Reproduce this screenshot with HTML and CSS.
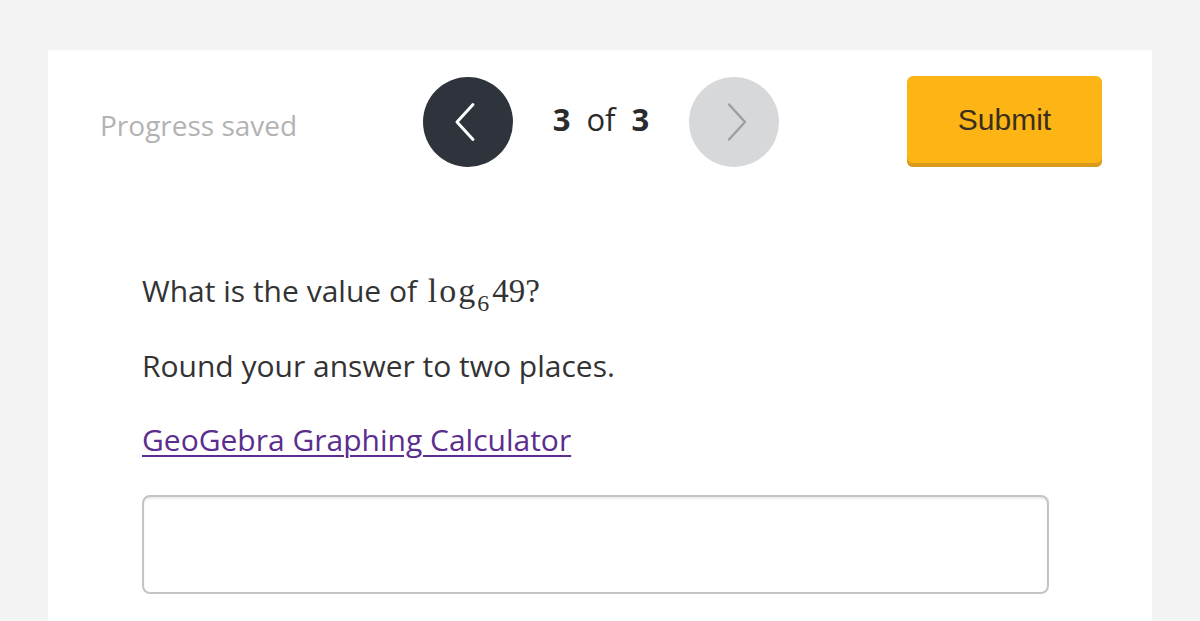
FILE: index.html
```html
<!DOCTYPE html>
<html lang="en">
<head>
<meta charset="utf-8">
<title>Question 3 of 3</title>
<link rel="stylesheet" href="styles.css">
</head>
<body>
<main class="card">
  <header class="topbar">
    <div class="status">Progress saved</div>
    <nav class="pager">
      <button class="nav-btn prev" aria-label="Previous">
        <svg class="chev" width="24" height="40" viewBox="0 0 24 40"><path d="M20 2.5 L4 20 L20 37.5" fill="none" stroke="#ffffff" stroke-width="3" stroke-linecap="round" stroke-linejoin="round"/></svg>
      </button>
      <div class="count"><b>3</b> of <b>3</b></div>
      <button class="nav-btn next" aria-label="Next">
        <svg class="chev" width="24" height="40" viewBox="0 0 24 40"><path d="M4 2.5 L20 20 L4 37.5" fill="none" stroke="#9d9fa2" stroke-width="2.5" stroke-linecap="round" stroke-linejoin="round"/></svg>
      </button>
    </nav>
    <div class="actions">
      <button class="submit">Submit</button>
    </div>
  </header>
  <section class="question">
    <p class="q-line">What is the value of <span class="math"><span class="fn">log</span><sub>6</sub>49?</span></p>
    <p class="q-line">Round your answer to two places.</p>
    <p class="q-line"><a class="tool-link" href="#">GeoGebra Graphing Calculator</a></p>
    <div class="answer" role="textbox"></div>
  </section>
</main>
</body>
</html>
```
FILE: styles.css
```css
html, body {
  margin: 0;
  padding: 0;
  height: 100%;
  background: #f3f3f3;
  overflow: hidden;
}
body {
  padding: 50px 48px 0;
  box-sizing: border-box;
  font-family: "Open Sans", "Noto Sans", sans-serif;
}
.card {
  background: #ffffff;
  height: 100%;
  padding: 26px 50px 0 52px;
  box-sizing: border-box;
}
.topbar {
  display: grid;
  grid-template-columns: 1fr auto 1fr;
  align-items: center;
  height: 91px;
}
.status {
  font-size: 28px;
  color: #b3b3b3;
  padding-top: 6px;
}
.pager {
  display: flex;
  align-items: center;
  gap: 40px;
}
.nav-btn {
  width: 90px;
  height: 90px;
  border-radius: 50%;
  border: none;
  padding: 0;
  display: flex;
  align-items: center;
  justify-content: center;
}
.prev { background: #2f333b; }
.prev .chev { margin-right: 6px; }
.next { background: #d7d8da; }
.next .chev { margin-left: 6px; }
.count {
  font-size: 31px;
  color: #2b2b2b;
  word-spacing: 8px;
  padding-bottom: 5px;
}
.count b { font-weight: 700; }
.actions {
  display: flex;
  justify-content: flex-end;
}
.submit {
  width: 195px;
  height: 91px;
  border: none;
  border-radius: 6px;
  background: #fdb515;
  box-shadow: inset 0 -4px 0 #d99a1e;
  font-family: "Liberation Sans", Arial, sans-serif;
  font-size: 30px;
  color: #3a2f1f;
  padding: 0 0 4px;
}
.question {
  padding: 103px 0 0 42px;
  margin-right: 53px;
}
.q-line {
  margin: 0 0 32.5px;
  font-size: 30px;
  line-height: 42px;
  color: #333333;
}
.math {
  font-family: "Liberation Serif", "Times New Roman", serif;
  font-size: 33px;
  line-height: 1;
  margin-left: 3px;
}
.math .fn {
  font-size: 34px;
  letter-spacing: 2px;
}
.math sub {
  font-size: 24px;
  vertical-align: -9px;
  line-height: 0;
  margin: 0 3px 0 0;
}
.tool-link {
  color: #5b2d8e;
  text-decoration: underline;
  text-decoration-thickness: 2px;
  text-underline-offset: 4px;
}
.answer {
  height: 99px;
  border: 2px solid #c4c4c4;
  border-radius: 8px;
  box-sizing: border-box;
  box-shadow: inset 0 2px 2px rgba(0,0,0,0.08);
  margin-top: 33.5px;
}
```
